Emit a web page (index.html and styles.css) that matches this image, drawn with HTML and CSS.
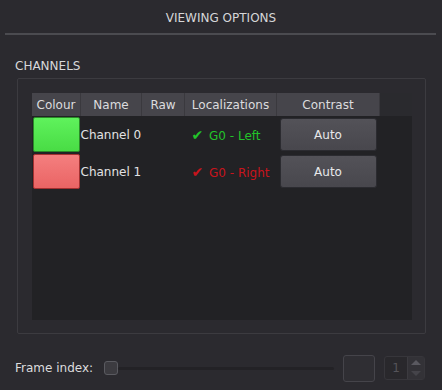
FILE: index.html
```html
<!DOCTYPE html>
<html lang="en">
<head>
  <meta charset="UTF-8">
  <title>Viewing Options</title>
  <link rel="stylesheet" href="styles.css">
</head>
<body>
  <div class="panel">
    <div class="title">VIEWING OPTIONS</div>
    <div class="separator"></div>

    <div class="section-label">CHANNELS</div>
    <div class="group">
      <div class="table-area">
        <table class="channels">
          <thead>
            <tr>
              <th class="col-colour">Colour</th>
              <th class="col-name">Name</th>
              <th class="col-raw">Raw</th>
              <th class="col-loc">Localizations</th>
              <th class="col-contrast">Contrast</th>
              <th class="col-rest"></th>
            </tr>
          </thead>
          <tbody>
            <tr>
              <td class="swatch-cell"><div class="swatch green"></div></td>
              <td class="name">Channel 0</td>
              <td></td>
              <td class="loc green-text"><span class="tick">&#10004;</span> G0 - Left</td>
              <td class="contrast"><button class="auto">Auto</button></td>
              <td></td>
            </tr>
            <tr>
              <td class="swatch-cell"><div class="swatch red"></div></td>
              <td class="name">Channel 1</td>
              <td></td>
              <td class="loc red-text"><span class="tick">&#10004;</span> G0 - Right</td>
              <td class="contrast"><button class="auto">Auto</button></td>
              <td></td>
            </tr>
          </tbody>
        </table>
      </div>
    </div>

    <div class="frame-row">
      <span class="frame-label">Frame index:</span>
      <div class="slider">
        <div class="handle"></div>
        <div class="track"></div>
      </div>
      <div class="play-btn"></div>
      <div class="spin">
        <span class="spin-value">1</span>
        <div class="spin-arrows">
          <span class="up"></span>
          <span class="down"></span>
        </div>
      </div>
    </div>
  </div>
</body>
</html>
```

FILE: styles.css
```css
html, body {
  margin: 0;
  padding: 0;
  background-color: #2b2a2f;
}

body {
  font-family: "DejaVu Sans", Verdana, sans-serif;
  font-size: 12px;
  color: #d8d8da;
  width: 442px;
  height: 390px;
  overflow: hidden;
}

.panel {
  padding: 0 5px;
}

.title {
  text-align: center;
  height: 33px;
  line-height: 36px;
  color: #d6d6d8;
}

.separator {
  height: 2px;
  background-color: #4b4b50;
  margin: 0 1px 0 0;
}

.section-label {
  margin: 24px 0 0 10px;
  line-height: 14px;
}

.group {
  margin: 5px 11px 0 12px;
  height: 256px;
  box-sizing: border-box;
  border: 1px solid #3c3b40;
  border-radius: 2px;
  padding: 14px 13px 13px 14px;
}

.table-area {
  height: 227px;
  background-color: #222225;
  overflow: hidden;
}

.channels {
  border-collapse: collapse;
  width: 100%;
}

.channels th {
  background-color: #46454b;
  color: #dcdcde;
  font-weight: normal;
  height: 23px;
  padding: 0;
  border-right: 1px solid #3a393e;
  text-align: center;
}

.channels th.col-rest {
  background-color: #2a2a2e;
  border-right: none;
}

.col-colour { width: 48px; }
.col-name { width: 60px; }
.col-raw { width: 42px; }
.col-loc { width: 91px; }
.col-contrast { width: 102px; }

.channels td {
  padding: 0;
  white-space: nowrap;
  vertical-align: middle;
}

.channels td.swatch-cell {
  padding: 1px;
}

.swatch {
  height: 35px;
  border-radius: 2px;
  box-sizing: border-box;
}

.swatch.green {
  background: linear-gradient(#5ff25c, #49dc45);
  border: 1px solid #2a8a28;
}

.swatch.red {
  background: linear-gradient(#f47f7f, #ea6464);
  border: 1px solid #a33030;
}

.name {
  color: #e2e2e4;
}

.channels td.loc {
  padding-left: 7px;
}

.tick {
  font-size: 14px;
  font-weight: bold;
  margin-right: 2px;
}

.green-text { color: #22c42a; }
.red-text { color: #c8141c; }

.auto {
  display: block;
  width: 97px;
  height: 33px;
  margin: 0 0 0 3px;
  border: 1px solid #2b2b30;
  border-radius: 3px;
  background: linear-gradient(#535258, #48474d);
  color: #e8e8ea;
  font-family: "DejaVu Sans", Verdana, sans-serif;
  font-size: 12px;
}

.frame-row {
  display: flex;
  align-items: center;
  margin: 20px 0 0 10px;
  height: 28px;
}

.frame-label {
  width: 89px;
  color: #dcdcde;
}

.slider {
  display: flex;
  align-items: center;
  width: 230px;
}

.handle {
  width: 12px;
  height: 12px;
  border: 1px solid #5a5a60;
  border-radius: 3px;
  background-color: #3c3b40;
}

.track {
  flex: 1;
  height: 3px;
  background-color: #232226;
  border-radius: 2px;
}

.play-btn {
  width: 30px;
  height: 25px;
  margin-left: 9px;
  border: 1px solid #45444a;
  border-radius: 3px;
  background-color: #2f2e33;
}

.spin {
  display: flex;
  margin-left: 9px;
  width: 39px;
  height: 22px;
  border: 1px solid #37363b;
  border-radius: 3px;
  background-color: #29282c;
}

.spin-value {
  width: 22px;
  text-align: center;
  line-height: 22px;
  color: #55545a;
}

.spin-arrows {
  flex: 1;
  display: flex;
  flex-direction: column;
  align-items: center;
  justify-content: space-around;
  background-color: #333237;
  border-left: 1px solid #3c3b40;
}

.up, .down {
  width: 0;
  height: 0;
  border-left: 5px solid transparent;
  border-right: 5px solid transparent;
}

.up { border-bottom: 5px solid #5a5960; }
.down { border-top: 5px solid #45444a; }
```
